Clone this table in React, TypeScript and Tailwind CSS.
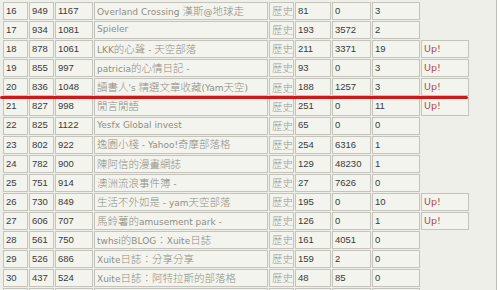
import React from "react";

type Row = [string, string, string, string, string, string, string, boolean];

const rows: Row[] = [
  ["16", "949", "1167", "Overland Crossing 漢斯@地球走", "81", "0", "3", false],
  ["17", "934", "1081", "Spieler", "193", "3572", "2", false],
  ["18", "878", "1061", "LKK的心聲 - 天空部落", "211", "3371", "19", true],
  ["19", "855", "997", "patricia的心情日記 -", "93", "0", "3", true],
  ["20", "836", "1048", "讀書人's 精選文章收藏(Yam天空)", "188", "1257", "3", true],
  ["21", "827", "998", "閒言閒語", "251", "0", "11", true],
  ["22", "825", "1122", "Yesfx Global invest", "65", "0", "0", false],
  ["23", "802", "922", "逸園小棧 - Yahoo!奇摩部落格", "254", "6316", "1", false],
  ["24", "782", "900", "陳阿信的漫畫網誌", "129", "48230", "1", false],
  ["25", "751", "914", "澳洲流浪事件簿 -", "27", "7626", "0", false],
  ["26", "730", "849", "生活不外如是 - yam天空部落", "195", "0", "10", true],
  ["27", "606", "707", "馬鈴薯的amusement park -", "126", "0", "1", true],
  ["28", "561", "750", "twhsi的BLOG：Xuite日誌", "161", "4051", "0", false],
  ["29", "526", "686", "Xuite日誌：分享分享", "159", "2", "0", false],
  ["30", "437", "524", "Xuite日誌：阿特拉斯的部落格", "48", "85", "0", false],
];

function Mixed({ text }: { text: string }) {
  const parts = text.split(/([\u3000-\u9fff\uff00-\uffef]+)/);
  return (
    <span className="whitespace-pre">
      {parts.map((p, i) =>
        /[\u3000-\u9fff\uff00-\uffef]/.test(p) ? (
          <span
            key={i}
            className="text-[10.5px] font-light [font-family:'Noto_Sans_CJK_TC',sans-serif]"
          >
            {p}
          </span>
        ) : (
          <span key={i}>{p}</span>
        )
      )}
    </span>
  );
}

const cell =
  "h-[18.1px] shrink-0 border border-[#c4c4bc] bg-[#f4f4ef] flex items-center pl-[2px] overflow-hidden whitespace-nowrap";
const num =
  "text-[9.5px] text-[#3a3a36] [font-family:'Liberation_Sans',Arial,sans-serif]";

export default function App() {
  return (
    <div className="relative w-[500px] h-[290px] overflow-hidden bg-white">
      <div className="w-[497px] h-[290px] border-r border-[#bdbdb5] bg-[#efefe9] pt-[2px] pl-[3px] flex flex-col gap-[1px]">
        {rows.map((r) => (
          <div key={r[0]} className="flex gap-[1px]">
            <div className={`${cell} w-[25px] ${num}`}>{r[0]}</div>
            <div className={`${cell} w-[25px] ${num}`}>{r[1]}</div>
            <div className={`${cell} w-[38px] ${num}`}>{r[2]}</div>
            <div
              className={`${cell} w-[174px] text-[9px] text-[#8e8e82] [font-family:'DejaVu_Sans','Noto_Sans_CJK_TC',sans-serif]`}
            >
              <Mixed text={r[3]} />
            </div>
            <div
              className={`${cell} w-[25px] pl-[1px] text-[10.5px] font-light text-[#9a9a90] [font-family:'Noto_Sans_CJK_TC',sans-serif]`}
            >
              歷史
            </div>
            <div className={`${cell} w-[36px] ${num}`}>{r[4]}</div>
            <div className={`${cell} w-[39px] ${num}`}>{r[5]}</div>
            <div className={`${cell} w-[48px] ${num}`}>{r[6]}</div>
            {r[7] && (
              <div
                className={`${cell} w-[48px] text-[9.5px] text-[#b04a4a] [font-family:'DejaVu_Sans',sans-serif]`}
              >
                Up!
              </div>
            )}
          </div>
        ))}
        <div className="flex gap-[1px]">
          <div className={`${cell} w-[25px]`} />
          <div className={`${cell} w-[25px]`} />
          <div className={`${cell} w-[38px]`} />
          <div className={`${cell} w-[174px]`} />
          <div className={`${cell} w-[25px]`} />
          <div className={`${cell} w-[36px]`} />
          <div className={`${cell} w-[39px]`} />
          <div className={`${cell} w-[48px]`} />
        </div>
      </div>
      <div className="absolute left-0 top-[95.5px] w-[468px] h-[3px] rounded-full bg-[#d01818]" />
    </div>
  );
}
